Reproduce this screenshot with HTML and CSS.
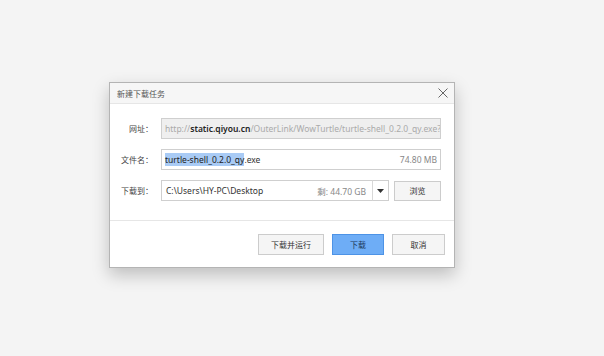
FILE: index.html
```html
<!DOCTYPE html>
<html>
<head>
<meta charset="utf-8">
<link rel="stylesheet" href="styles.css">
</head>
<body>
<div class="dialog">
  <div class="titlebar">
    <span class="title">新建下载任务</span>
    <svg class="close" width="10" height="10" viewBox="0 0 10 10"><path d="M0.5 0.5 L9.5 9.5 M9.5 0.5 L0.5 9.5" stroke="#666" stroke-width="1" fill="none"/></svg>
  </div>
  <div class="form">
    <div class="row">
      <label class="label">网址：</label>
      <div class="field disabled"><span class="dim">http://</span><span class="host">static.qiyou.cn</span><span class="dim">/OuterLink/WowTurtle/turtle-shell_0.2.0_qy.exe?qiy</span></div>
    </div>
    <div class="row">
      <label class="label">文件名：</label>
      <div class="field"><span class="sel">turtle-shell_0.2.0_qy</span><span>.exe</span><span class="spacer"></span><span class="meta">74.80 MB</span></div>
    </div>
    <div class="row">
      <label class="label">下载到：</label>
      <div class="combo">
        <div class="field path"><span>C:\Users\HY-PC\Desktop</span><span class="spacer"></span><span class="meta">剩: 44.70 GB</span></div>
        <div class="drop"><svg width="7" height="4" viewBox="0 0 7 4"><path d="M0 0 H7 L3.5 4 Z" fill="#333"/></svg></div>
      </div>
      <button class="btn browse">浏览</button>
    </div>
  </div>
  <div class="footer">
    <button class="btn run">下载并运行</button>
    <button class="btn primary ok">下载</button>
    <button class="btn cancel">取消</button>
  </div>
</div>
</body>
</html>
```

FILE: styles.css
```css
html, body {
  margin: 0;
  padding: 0;
  background: #f4f4f4;
  font-family: "Noto Sans", "Noto Sans CJK SC", sans-serif;
  color: #333;
}
body {
  width: 604px;
  height: 356px;
  overflow: hidden;
}
.dialog {
  margin: 82px 0 0 109px;
  width: 344px;
  height: 184px;
  border: 1px solid #b4b4b4;
  background: #fff;
  box-shadow: 0 7px 16px rgba(0, 0, 0, 0.22);
  display: flex;
  flex-direction: column;
}
.titlebar {
  height: 20px;
  background: #f6f6f6;
  border-bottom: 1px solid #e6e6e6;
  display: flex;
  align-items: center;
  padding: 0 6px 0 7px;
}
.title {
  font-size: 8px;
  color: #555;
  flex: 1;
}
.close {
  display: block;
}
.form {
  padding: 14px 13px 19px 8px;
  display: flex;
  flex-direction: column;
  gap: 10px;
  border-bottom: 1px solid #e6e6e6;
}
.row {
  display: flex;
  align-items: center;
  height: 21px;
}
.label {
  flex: 0 0 35px;
  padding-right: 8px;
  text-align: right;
  font-size: 8px;
  color: #444;
  white-space: nowrap;
}
.field {
  flex: 1;
  min-width: 0;
  height: 19px;
  border: 1px solid #cfcfcf;
  display: flex;
  align-items: center;
  padding: 0 3px;
  font-size: 8.5px;
  color: #333;
  white-space: nowrap;
  overflow: hidden;
}
.disabled {
  background: #efefef;
}
.dim {
  color: #aaa;
}
.host {
  color: #222;
  font-weight: 600;
}
.sel {
  background: #a9cbf5;
  color: #222;
  line-height: 13px;
}
.spacer {
  flex: 1;
}
.meta {
  color: #888;
}
.combo {
  flex: 0 0 228px;
  height: 21px;
  display: flex;
}
.path {
  padding-left: 4px;
  padding-right: 6px;
}
.drop {
  width: 15px;
  height: 19px;
  border: 1px solid #cfcfcf;
  border-left: 1px solid #d8d8d8;
  margin-left: -1px;
  display: flex;
  align-items: center;
  justify-content: center;
}
.btn {
  font-family: "Noto Sans CJK SC", "Noto Sans", sans-serif;
  font-size: 8px;
  color: #333;
  background: #f5f5f5;
  border: 1px solid #cccccc;
  padding: 0;
  margin: 0;
  height: 21px;
}
.browse {
  width: 47px;
  height: 20px;
  margin-left: 5px;
}
.footer {
  display: flex;
  justify-content: flex-end;
  gap: 8px;
  padding: 13px 9px 0 0;
}
.run {
  width: 66px;
}
.ok {
  width: 52px;
}
.cancel {
  width: 53px;
}
.primary {
  background: #6eadf6;
  border-color: #4d93e6;
  color: #1d3a5c;
}
```
